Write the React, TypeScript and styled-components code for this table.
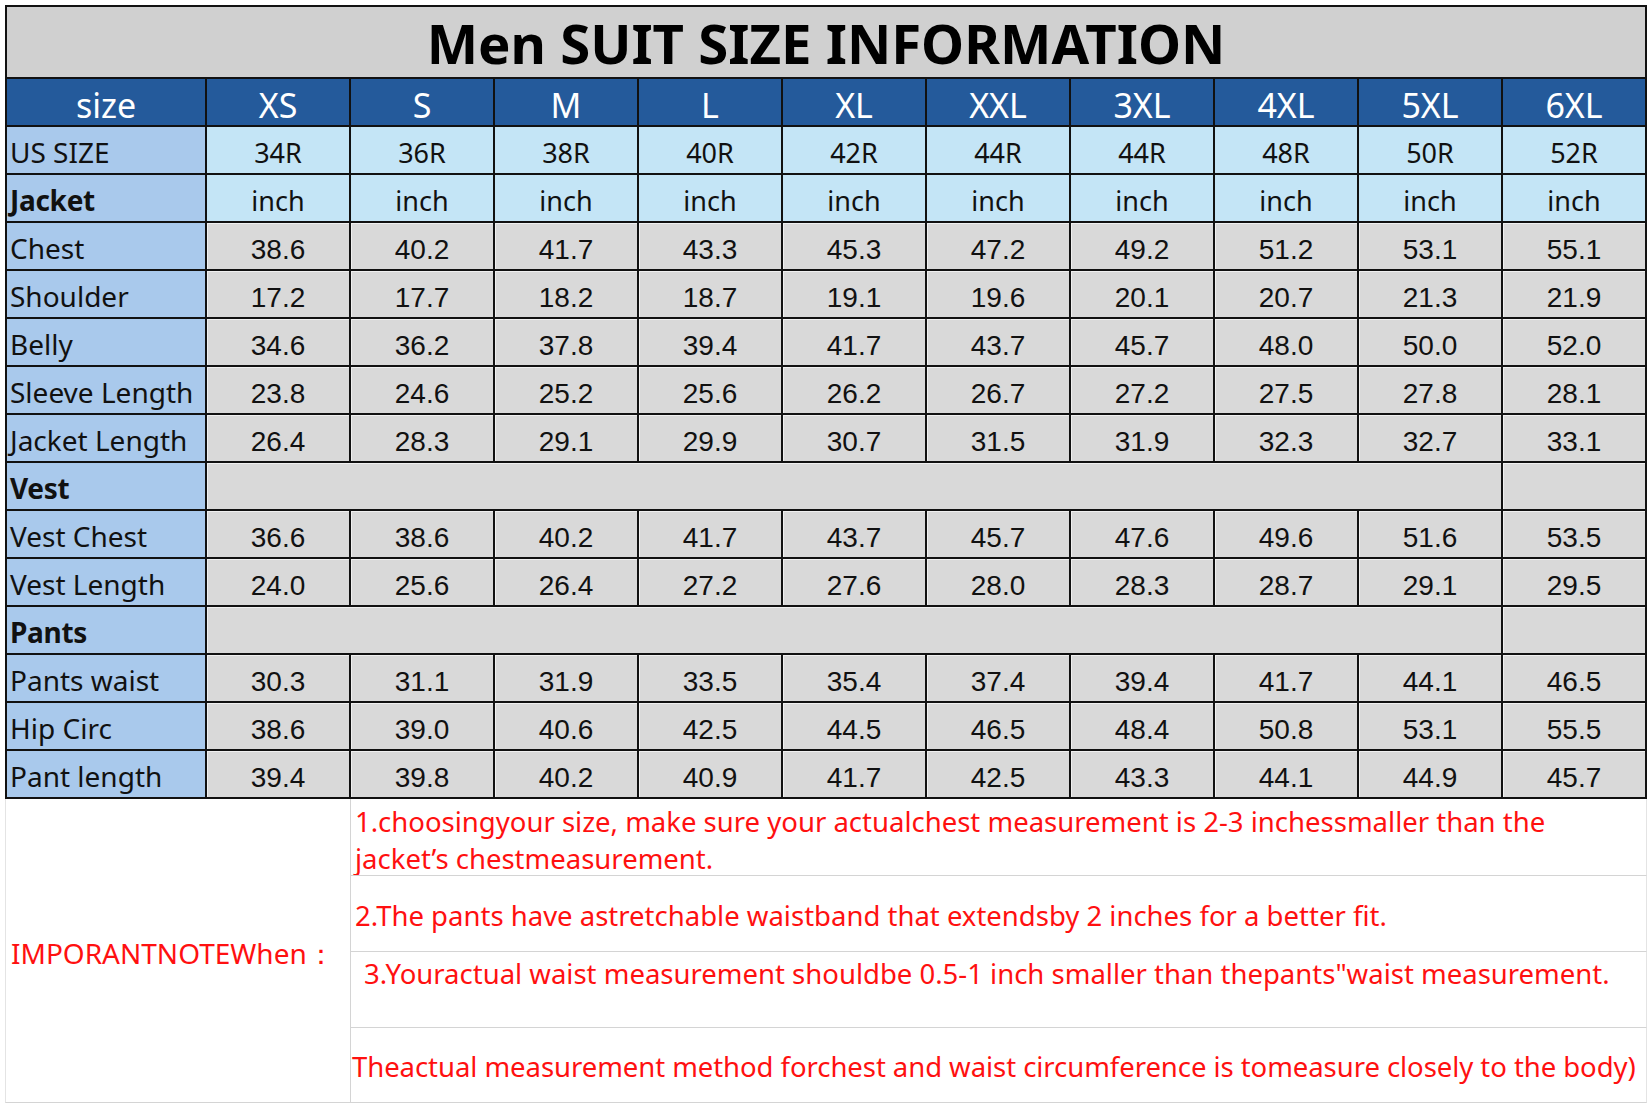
import styled, { createGlobalStyle } from "styled-components";

const GlobalStyle = createGlobalStyle`
  html, body {
    margin: 0;
    padding: 0;
    background: #ffffff;
  }
  body {
    font-family: "Noto Sans", "Liberation Sans", sans-serif;
  }
`;

type Tone = "cyan" | "gray";

const SIZES = ["XS", "S", "M", "L", "XL", "XXL", "3XL", "4XL", "5XL", "6XL"];
const US_SIZES = ["34R", "36R", "38R", "40R", "42R", "44R", "44R", "48R", "50R", "52R"];

const JACKET: [string, string[]][] = [
  ["Chest", ["38.6", "40.2", "41.7", "43.3", "45.3", "47.2", "49.2", "51.2", "53.1", "55.1"]],
  ["Shoulder", ["17.2", "17.7", "18.2", "18.7", "19.1", "19.6", "20.1", "20.7", "21.3", "21.9"]],
  ["Belly", ["34.6", "36.2", "37.8", "39.4", "41.7", "43.7", "45.7", "48.0", "50.0", "52.0"]],
  ["Sleeve Length", ["23.8", "24.6", "25.2", "25.6", "26.2", "26.7", "27.2", "27.5", "27.8", "28.1"]],
  ["Jacket Length", ["26.4", "28.3", "29.1", "29.9", "30.7", "31.5", "31.9", "32.3", "32.7", "33.1"]],
];

const VEST: [string, string[]][] = [
  ["Vest Chest", ["36.6", "38.6", "40.2", "41.7", "43.7", "45.7", "47.6", "49.6", "51.6", "53.5"]],
  ["Vest Length", ["24.0", "25.6", "26.4", "27.2", "27.6", "28.0", "28.3", "28.7", "29.1", "29.5"]],
];

const PANTS: [string, string[]][] = [
  ["Pants waist", ["30.3", "31.1", "31.9", "33.5", "35.4", "37.4", "39.4", "41.7", "44.1", "46.5"]],
  ["Hip Circ", ["38.6", "39.0", "40.6", "42.5", "44.5", "46.5", "48.4", "50.8", "53.1", "55.5"]],
  ["Pant length", ["39.4", "39.8", "40.2", "40.9", "41.7", "42.5", "43.3", "44.1", "44.9", "45.7"]],
];

function App() {
  const dataRows = (rows: [string, string[]][]) =>
    rows.map(([label, values]) => [
      <LabelCell key={label}>{label}</LabelCell>,
      ...values.map((v, i) => (
        <ValueCell key={label + i} $tone="gray" $numeric>
          {v}
        </ValueCell>
      )),
    ]);

  return (
    <>
      <GlobalStyle />
      <Page>
        <SizeGrid>
          <Title>Men SUIT SIZE INFORMATION</Title>

          <HeadCell>size</HeadCell>
          {SIZES.map((s) => (
            <HeadCell key={s}>{s}</HeadCell>
          ))}

          <LabelCell>US SIZE</LabelCell>
          {US_SIZES.map((s, i) => (
            <ValueCell key={"us" + i} $tone="cyan">
              {s}
            </ValueCell>
          ))}

          <LabelCell $bold>Jacket</LabelCell>
          {SIZES.map((s) => (
            <ValueCell key={"inch" + s} $tone="cyan">
              inch
            </ValueCell>
          ))}

          {dataRows(JACKET)}

          <LabelCell $bold>Vest</LabelCell>
          <SectionFill />
          <ValueCell $tone="gray" />

          {dataRows(VEST)}

          <LabelCell $bold>Pants</LabelCell>
          <SectionFill />
          <ValueCell $tone="gray" />

          {dataRows(PANTS)}
        </SizeGrid>

        <Notes>
          <NoteLabel>IMPORANTNOTEWhen：</NoteLabel>
          <NoteCell $top={4} $left={4}>
            1.choosingyour size, make sure your actualchest measurement is 2-3 inchessmaller than the
            <br />
            jacket’s chestmeasurement.
          </NoteCell>
          <NoteCell $top={21} $left={4}>
            2.The pants have astretchable waistband that extendsby 2 inches for a better fit.
          </NoteCell>
          <NoteCell $top={3} $left={13}>
            3.Youractual waist measurement shouldbe 0.5-1 inch smaller than thepants"waist measurement.
          </NoteCell>
          <NoteCell $top={20} $left={1} $tight>
            Theactual measurement method forchest and waist circumference is tomeasure closely to the body)
          </NoteCell>
        </Notes>
      </Page>
    </>
  );
}

const Page = styled.div`
  width: 1652px;
  height: 1106px;
  padding: 5px 0 0 5px;
  box-sizing: border-box;
  overflow: hidden;
  background: #ffffff;
`;

const SizeGrid = styled.div`
  display: grid;
  grid-template-columns: 198px repeat(10, 142px);
  grid-template-rows: 70px repeat(15, 46px);
  gap: 2px;
  padding: 2px;
  width: fit-content;
  background: #111111;
`;

const Title = styled.div`
  grid-column: 1 / -1;
  display: flex;
  align-items: center;
  justify-content: center;
  background: #d0d0d0;
  color: #000000;
  font-family: "Noto Sans", sans-serif;
  font-weight: 700;
  font-size: 54.5px;
  line-height: 1;
  padding-top: 2px;
`;

const HeadCell = styled.div`
  display: flex;
  align-items: center;
  justify-content: center;
  background: #245a9b;
  color: #ffffff;
  font-size: 34px;
  line-height: 1;
  padding-top: 6px;
`;

const LabelCell = styled.div<{ $bold?: boolean }>`
  display: flex;
  align-items: center;
  padding: 4px 0 0 3px;
  background: #a9c9ec;
  color: #111111;
  font-size: 28px;
  font-weight: ${({ $bold }) => ($bold ? 700 : 400)};
  letter-spacing: ${({ $bold }) => ($bold ? "-0.3px" : "0")};
  white-space: nowrap;
  overflow: hidden;
`;

const ValueCell = styled.div<{ $tone: Tone; $numeric?: boolean }>`
  display: flex;
  align-items: center;
  justify-content: center;
  padding-top: ${({ $numeric }) => ($numeric ? "7px" : "4px")};
  background: ${({ $tone }) => ($tone === "cyan" ? "#c4e5f6" : "#d9d9d9")};
  box-shadow: ${({ $tone }) => ($tone === "gray" ? "inset 1px 1px 0 #f0f0f0" : "none")};
  color: #111111;
  font-family: ${({ $numeric }) =>
    $numeric ? '"Liberation Sans", Arial, sans-serif' : '"Noto Sans", sans-serif'};
  font-size: ${({ $numeric }) => ($numeric ? "28px" : "27px")};
`;

const SectionFill = styled.div`
  grid-column: span 9;
  background: #d9d9d9;
  box-shadow: inset 1px 1px 0 #f0f0f0;
`;

const Notes = styled.div`
  display: grid;
  grid-template-columns: 346px 1296px;
  grid-template-rows: 77px 76px 76px 75px;
  width: 1642px;
`;

const NoteLabel = styled.div`
  grid-row: 1 / span 4;
  display: flex;
  align-items: center;
  padding: 6px 0 0 5px;
  box-sizing: border-box;
  border-left: 1px solid #e4e4e4;
  border-right: 1px solid #d4d4d4;
  border-bottom: 1px solid #d4d4d4;
  color: #ff1010;
  font-size: 28px;
  white-space: nowrap;
`;

const NoteCell = styled.div<{ $top: number; $left: number; $tight?: boolean }>`
  box-sizing: border-box;
  padding: ${({ $top, $left }) => `${$top}px 0 0 ${$left}px`};
  border-bottom: 1px solid #d4d4d4;
  border-right: 1px solid #e4e4e4;
  color: #ff1010;
  font-size: 27.5px;
  letter-spacing: ${({ $tight }) => ($tight ? "-0.06px" : "0")};
  line-height: 37px;
  white-space: nowrap;
  overflow: hidden;
`;

export default App;
